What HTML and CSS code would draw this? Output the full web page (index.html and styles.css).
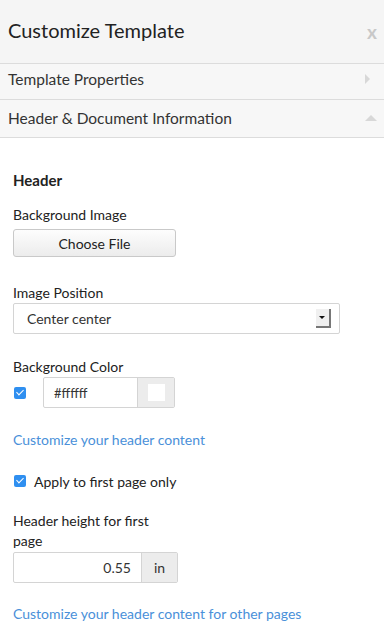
FILE: index.html
```html
<!DOCTYPE html>
<html lang="en">
<head>
  <meta charset="UTF-8" />
  <title>Customize Template</title>
  <link rel="stylesheet" href="styles.css">
</head>
<body>
  <div class="panel-head">
    <h1>Customize Template</h1>
    <span class="close">x</span>
  </div>

  <div class="acc-row first">
    <span>Template Properties</span>
    <span class="arrow-right"></span>
  </div>
  <div class="acc-row open">
    <span>Header &amp; Document Information</span>
    <span class="arrow-up"></span>
  </div>

  <div class="content">
    <h3>Header</h3>

    <div class="field">
      <label class="spaced">Background Image</label>
      <button class="file-btn">Choose File</button>
    </div>

    <div class="field">
      <label>Image Position</label>
      <div class="select">
        <span>Center center</span>
        <span class="select-arrow"></span>
      </div>
    </div>

    <div class="field">
      <label>Background Color</label>
      <div class="color-row">
        <span class="check"></span>
        <div class="input-group">
          <span class="input">#ffffff</span>
          <span class="addon"><span class="swatch"></span></span>
        </div>
      </div>
    </div>

    <a class="link" href="#">Customize your header content</a>

    <div class="check-row">
      <span class="check"></span>
      <span>Apply to first page only</span>
    </div>

    <div class="field">
      <label class="narrow">Header height for first page</label>
      <div class="input-group">
        <span class="input num">0.55</span>
        <span class="addon unit">in</span>
      </div>
    </div>

    <a class="link" href="#">Customize your header content for other pages</a>
  </div>
</body>
</html>
```
FILE: styles.css
```css
* {
  margin: 0;
  padding: 0;
  box-sizing: border-box;
  font-family: 'Lato', sans-serif;
}
body {
  width: 384px;
  height: 632px;
  overflow: hidden;
  background: white;
  color: #222;
}
.panel-head {
  height: 64px;
  background: #f5f5f5;
  border-bottom: 1px solid #dcdcdc;
  display: flex;
  align-items: center;
  justify-content: space-between;
  padding: 0 7px 4px 8px;
}
.panel-head h1 {
  font-size: 20px;
  font-weight: 400;
  color: #222;
}
.close {
  color: #c8c8c8;
  font-size: 19px;
  font-weight: 700;
  margin-top: 3px;
}
.acc-row {
  height: 37px;
  background: #f7f7f7;
  border-bottom: 1px solid #dcdcdc;
  display: flex;
  align-items: center;
  justify-content: space-between;
  padding: 0 7px 3px 8px;
  font-size: 15.5px;
  color: #333;
}
.acc-row.first {
  height: 36px;
  padding-bottom: 5px;
}
.acc-row.open {
  height: 38px;
  padding-bottom: 2px;
}
.arrow-right {
  width: 0;
  height: 0;
  border-top: 5px solid transparent;
  border-bottom: 5px solid transparent;
  border-left: 5px solid #d8d8d8;
  margin-right: 7px;
}
.arrow-up {
  width: 0;
  height: 0;
  border-left: 6px solid transparent;
  border-right: 6px solid transparent;
  border-bottom: 6px solid #d8d8d8;
}
.content {
  padding: 32px 13px 0 13px;
  font-size: 14px;
}
.content h3 {
  font-size: 15px;
  font-weight: 700;
  line-height: 20px;
  margin-bottom: 15px;
}
.field {
  margin-bottom: 23px;
}
.field label {
  display: block;
  line-height: 20px;
}
.field label.spaced {
  margin-bottom: 4px;
}
.field label.narrow {
  width: 150px;
  margin-bottom: 1px;
}
.field:nth-of-type(1) {
  margin-bottom: 26px;
}
.file-btn {
  width: 163px;
  height: 28px;
  font-size: 14px;
  color: #222;
  background: linear-gradient(#fdfdfd, #ececec);
  border: 1px solid #c9c9c9;
  border-radius: 3px;
}
.select {
  width: 327px;
  height: 31px;
  border: 1px solid #d4d4d4;
  border-radius: 2px;
  display: flex;
  align-items: center;
  justify-content: space-between;
  padding: 0 8px 0 13px;
  font-size: 14px;
  color: #333;
}
.select-arrow {
  width: 15px;
  height: 19px;
  background: #f0f0f0;
  border-right: 2px solid #777;
  border-bottom: 2px solid #777;
  position: relative;
}
.select-arrow::after {
  content: "";
  position: absolute;
  left: 3px;
  top: 7px;
  border-left: 3px solid transparent;
  border-right: 3px solid transparent;
  border-top: 3px solid #111;
}
.color-row {
  display: flex;
  align-items: center;
  gap: 17px;
}
.check {
  width: 12px;
  height: 12px;
  border-radius: 2px;
  background: #2f8ff0;
  position: relative;
  flex-shrink: 0;
  margin-left: 1px;
}
.check::after {
  content: "";
  position: absolute;
  left: 4px;
  top: 1px;
  width: 3px;
  height: 6px;
  border-right: 1.5px solid white;
  border-bottom: 1.5px solid white;
  transform: rotate(45deg);
}
.input-group {
  display: flex;
  border: 1px solid #d4d4d4;
  border-radius: 2px;
  height: 31px;
  width: fit-content;
}
.input {
  display: flex;
  align-items: center;
  width: 93px;
  padding-left: 10px;
  font-size: 13px;
  color: #333;
}
.addon {
  display: flex;
  align-items: center;
  justify-content: center;
  width: 37px;
  background: #ececec;
  border-left: 1px solid #d4d4d4;
}
.swatch {
  width: 17px;
  height: 17px;
  background: white;
}
.input.num {
  width: 127px;
  justify-content: flex-end;
  padding-right: 10px;
  font-size: 14px;
}
.unit {
  width: 36px;
  font-size: 14px;
  color: #333;
}
.link {
  display: block;
  color: #4a90d9;
  text-decoration: none;
  font-size: 14px;
  line-height: 16px;
  margin-bottom: 23px;
}
.content > .field:nth-of-type(3) {
  margin-bottom: 24px;
}
.check-row {
  display: flex;
  align-items: center;
  gap: 8px;
  height: 20px;
  font-size: 14px;
  margin-bottom: 20px;
}
```
